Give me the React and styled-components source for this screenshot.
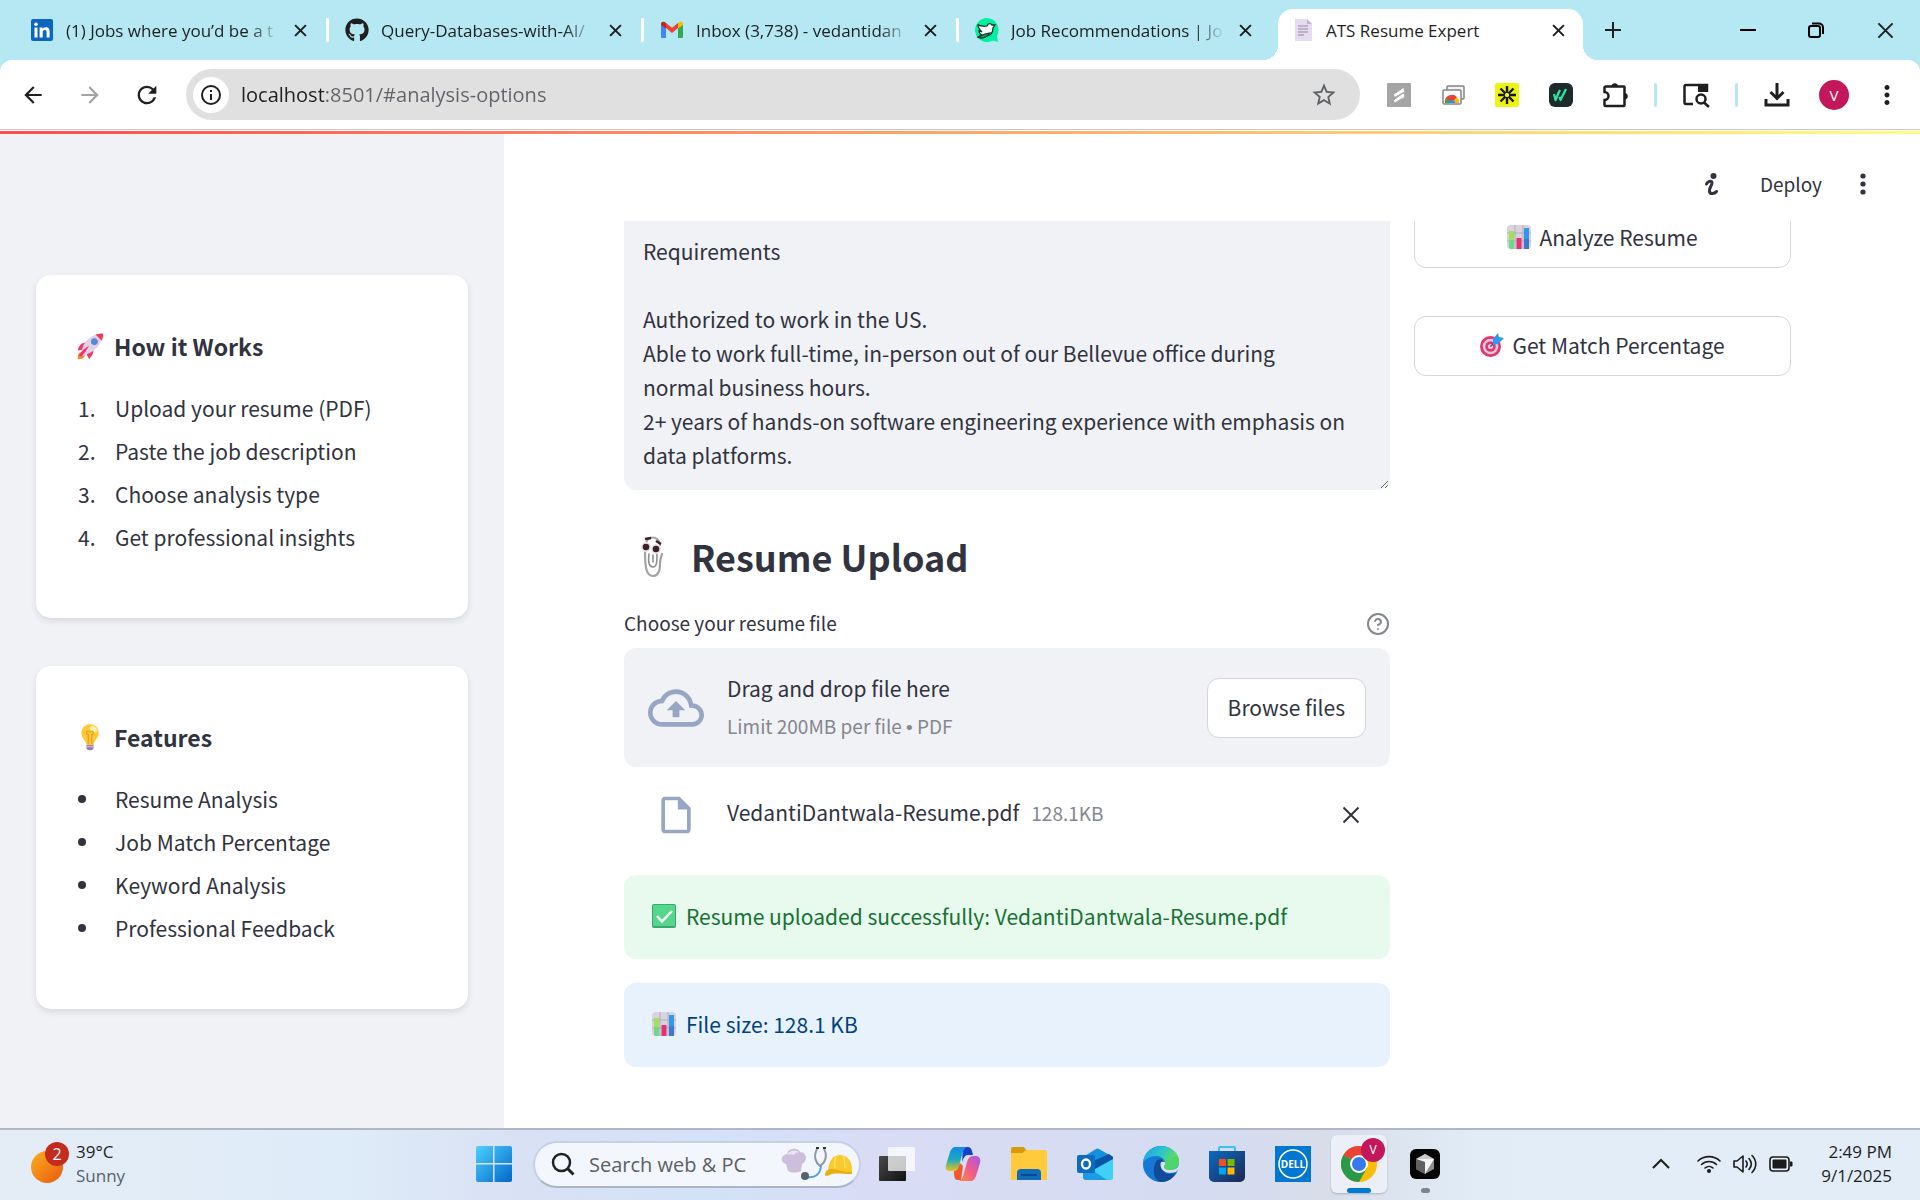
import React from "react";
import styled, { createGlobalStyle, css } from "styled-components";
import { FaGithub } from "react-icons/fa";
import { FiHelpCircle } from "react-icons/fi";
import {
  MdArrowBack,
  MdArrowForward,
  MdRefresh,
  MdStarBorder,
  MdMoreVert,
  MdOutlineCloudUpload,
  MdOutlineInsertDriveFile,
} from "react-icons/md";

const ui = `"Open Sans", "Noto Sans", sans-serif`;
const body = `"Noto Sans CJK SC", "Noto Sans", sans-serif`;
const ink = "#31333f";

const GlobalStyle = createGlobalStyle`
  *, *::before, *::after { box-sizing: border-box; }
  body { margin: 0; background: #fff; font-family: ${ui}; color: #1f1f1f; }
  button, input, textarea { font: inherit; color: inherit; margin: 0; }
  button { padding: 0; border: 0; background: none; cursor: pointer; }
  h2, h3, p, ol, ul { margin: 0; padding: 0; font-weight: inherit; }
  svg { display: block; flex: none; }
`;

const Screen = styled.div`
  display: flex;
  flex-direction: column;
  height: 100vh;
  overflow: hidden;
`;

/* ---------- tab strip ---------- */

const TabStrip = styled.header`
  display: flex;
  height: 60px;
  padding-left: 14px;
  background: #b5e8f2;
  flex: none;
`;

const TabList = styled.div`
  display: flex;
  flex: none;
`;

const Tab = styled.div`
  display: flex;
  align-items: center;
  width: ${(p) => (p.$active ? 305 : 315)}px;
  height: ${(p) => (p.$active ? 51 : 60)}px;
  margin-top: ${(p) => (p.$active ? 9 : 0)}px;
  margin-left: ${(p) => (p.$active ? 4 : 0)}px;
  padding: ${(p) => (p.$active ? "0 13px 9px 16px" : "0 17px 0 16px")};
  gap: 12px;
  position: relative;
  ${(p) =>
    p.$active &&
    css`
      background: #fff;
      border-radius: 15px 15px 0 0;
      &::before,
      &::after {
        content: "";
        position: absolute;
        bottom: 0;
        width: 15px;
        height: 15px;
      }
      &::before {
        left: -15px;
        background: radial-gradient(circle at 0 0, transparent 15px, #fff 15px);
      }
      &::after {
        right: -15px;
        background: radial-gradient(circle at 100% 0, transparent 15px, #fff 15px);
      }
    `}
  ${(p) =>
    p.$divided &&
    css`
      &::after {
        content: "";
        position: absolute;
        right: 0;
        top: 18px;
        width: 3px;
        height: 24px;
        border-radius: 1px;
        background: #fff;
      }
    `}
`;

const TabTitle = styled.span`
  flex: 1;
  min-width: 0;
  margin-right: -8px;
  padding-top: 2px;
  overflow: hidden;
  white-space: nowrap;
  font-size: 17px;
  line-height: 24px;
  mask-image: ${(p) => (p.$fade ? "linear-gradient(to right, #000 84%, transparent 98%)" : "none")};
`;

const IconButton = styled.button`
  display: flex;
  align-items: center;
  justify-content: center;
  width: ${(p) => p.$w || 24}px;
  height: ${(p) => p.$h || 24}px;
  color: ${(p) => p.$color || "#1f1f1f"};
  flex: none;
`;

const WindowControls = styled.div`
  display: flex;
  margin-left: auto;
`;

/* ---------- toolbar ---------- */

const ToolbarBack = styled.div`
  background: #b5e8f2;
  flex: none;
`;

const Toolbar = styled.div`
  display: flex;
  align-items: center;
  height: 69px;
  padding: 0 12px 0 12px;
  background: #fff;
  border-radius: 12px 12px 0 0;
`;

const NavButtons = styled.nav`
  display: flex;
  gap: 15px;
  margin-right: 18px;
`;

const Omnibox = styled.div`
  display: flex;
  align-items: center;
  flex: 1;
  height: 51px;
  padding: 0 22px 0 7px;
  gap: 12px;
  border-radius: 26px;
  background: #e0e0e0;
`;

const SiteInfo = styled.button`
  display: flex;
  align-items: center;
  justify-content: center;
  width: 36px;
  height: 36px;
  border-radius: 50%;
  background: #fff;
`;

const Address = styled.input`
  flex: 1;
  min-width: 0;
  height: 36px;
  padding: 0;
  border: 0;
  outline: 0;
  font-size: 20px;
  color: transparent;
  background: linear-gradient(to right, #1f1f1f 83px, #5f6368 83px);
  background-clip: text;
`;

const Extensions = styled.div`
  display: flex;
  align-items: center;
  margin-left: 12px;
`;

const ToolDivider = styled.span`
  width: 3px;
  height: 24px;
  margin: ${(p) => p.$m};
  border-radius: 2px;
  background: #b5e8f2;
`;

const Avatar = styled.button`
  width: 30px;
  height: 30px;
  margin: 0 17px 0 15px;
  border-radius: 50%;
  background: #c2185b;
  color: #fff;
  font-size: 15px;
  line-height: 30px;
`;

/* ---------- web page ---------- */

const Page = styled.div`
  display: flex;
  flex-direction: column;
  flex: 1;
  min-height: 0;
  border-top: 1px solid #c7c7c7;
  font-family: ${body};
  color: ${ink};
`;

const Decoration = styled.div`
  height: 3px;
  margin-top: 1px;
  background: linear-gradient(to right, #ff4b4b, #ffa569 50%, #fffd80);
  flex: none;
`;

const Columns = styled.div`
  display: flex;
  flex: 1;
  min-height: 0;
`;

const Sidebar = styled.aside`
  display: flex;
  flex-direction: column;
  gap: 48px;
  width: 504px;
  padding: 141px 36px 0;
  background: #f0f2f6;
  flex: none;
`;

const Card = styled.section`
  height: 343px;
  padding: 50px 40px;
  border-radius: 15px;
  background: #fff;
  box-shadow: 0 3px 6px rgba(0, 0, 0, 0.1);
`;

const CardTitle = styled.h3`
  display: flex;
  align-items: center;
  gap: 10px;
  margin-bottom: 22px;
  font-size: 23px;
  font-weight: 700;
  line-height: 42px;
`;

const CardList = styled.ul`
  display: flex;
  flex-direction: column;
  gap: 5px;
  list-style: none;
  font-size: 21px;
  line-height: 38px;
`;

const CardItem = styled.li`
  display: flex;
  align-items: center;
`;

const Marker = styled.span`
  width: 39px;
  padding-left: 2px;
  flex: none;
`;

const Dot = styled.span`
  display: block;
  width: 8px;
  height: 8px;
  border-radius: 50%;
  background: ${ink};
`;

const Main = styled.main`
  display: flex;
  flex-direction: column;
  flex: 1;
  min-width: 0;
  background: #fff;
`;

const AppHeader = styled.div`
  display: flex;
  align-items: center;
  justify-content: flex-end;
  height: 87px;
  padding: 13px 39px 0 0;
  flex: none;
`;

const DeployButton = styled.button`
  margin: 0 23px 0 41px;
  font-size: 19px;
  line-height: 30px;
`;

const Viewport = styled.div`
  flex: 1;
  min-height: 0;
  overflow: hidden;
`;

const Scrolled = styled.div`
  display: grid;
  grid-template-columns: minmax(0, 1fr) 377px;
  gap: 24px;
  margin-top: -13px;
  padding: 0 129px 0 120px;
`;

const Column = styled.div`
  display: flex;
  flex-direction: column;
`;

const JobText = styled.textarea`
  display: block;
  width: 100%;
  height: 282px;
  padding: 25px 18px 16px;
  border: 1px solid #f0f2f6;
  border-radius: 12px;
  outline: 0;
  background: #f0f2f6;
  font-size: 21px;
  line-height: 34px;
  overflow: hidden;
  resize: vertical;
`;

const Heading = styled.h2`
  display: flex;
  align-items: center;
  gap: 14px;
  margin-top: 36px;
  padding-left: 2px;
  font-size: 36px;
  font-weight: 700;
  line-height: 60px;
`;

const FieldRow = styled.div`
  display: flex;
  align-items: center;
  justify-content: space-between;
  height: 36px;
  margin-top: 20px;
  margin-bottom: 6px;
`;

const FieldLabel = styled.label`
  padding-bottom: 2px;
  font-size: 19px;
  line-height: 30px;
`;

const Dropzone = styled.div`
  display: flex;
  align-items: center;
  height: 119px;
  padding: 0 24px;
  border-radius: 12px;
  background: #f0f2f6;
`;

const DropText = styled.div`
  flex: 1;
  margin-left: 23px;
`;

const DropTitle = styled.p`
  font-size: 21px;
  line-height: 38px;
`;

const Muted = styled.span`
  font-size: 19px;
  line-height: 38px;
  color: #85878f;
`;

const Bullet = styled.span`
  font-family: "Liberation Sans", sans-serif;
`;

const Outlined = styled.button`
  display: flex;
  align-items: center;
  justify-content: center;
  gap: 8px;
  height: 60px;
  padding: 0 ${(p) => p.$pad || 18}px 2px;
  border: 1px solid #d6d6d9;
  border-radius: 12px;
  background: #fff;
  font-size: 21px;
  line-height: 38px;
`;

const FileRow = styled.div`
  display: flex;
  align-items: center;
  height: 60px;
  margin: 18px 24px 30px 30px;
`;

const FileInfo = styled.div`
  display: flex;
  align-items: baseline;
  gap: 12px;
  margin-left: 29px;
  padding-bottom: 6px;
`;

const FileName = styled.span`
  font-size: 21px;
  line-height: 38px;
`;

const RemoveSlot = styled.div`
  margin-left: auto;
`;

const Alert = styled.div`
  display: flex;
  align-items: center;
  gap: 10px;
  height: 84px;
  margin-bottom: 24px;
  padding: 0 28px 2px;
  border-radius: 12px;
  background: ${(p) => (p.$success ? "#e8f9ee" : "#e8f2fc")};
  color: ${(p) => (p.$success ? "#177233" : "#004280")};
  font-size: 21px;
  line-height: 38px;
`;

const ActionColumn = styled(Column)`
  gap: 48px;
`;

/* ---------- taskbar ---------- */

const Taskbar = styled.footer`
  display: grid;
  grid-template-columns: 1fr auto 1fr;
  align-items: center;
  height: 72px;
  padding-bottom: 2px;
  border-top: 2px solid #b0b7c3;
  background: linear-gradient(
    to right,
    #e4edf6 0%,
    #deebf8 18%,
    #d9e1f4 27%,
    #d3e2f7 37%,
    #d8dcf4 46%,
    #d5dcf2 63%,
    #d8dde9 69%,
    #e1ecf6 77%,
    #e2edf8 100%
  );
  flex: none;
`;

const Weather = styled.div`
  display: flex;
  align-items: center;
  gap: 6px;
  padding-left: 30px;
`;

const WeatherText = styled.div`
  font-size: 17px;
  line-height: 24px;
`;

const Conditions = styled.div`
  color: #5a6068;
`;

const TaskIcons = styled.div`
  display: flex;
  align-items: center;
  padding-left: 3px;
`;

const StartButton = styled(IconButton)`
  margin-right: 10px;
`;

const SearchBox = styled.label`
  display: flex;
  align-items: center;
  width: 328px;
  height: 47px;
  padding: 0 6px 0 16px;
  margin-right: 3px;
  border: 2px solid #c5d1e6;
  border-bottom-color: #aab5c8;
  border-radius: 24px;
  background: #f3f6fd;
`;

const SearchInput = styled.input`
  flex: 1;
  min-width: 0;
  padding: 0;
  margin-left: 14px;
  border: 0;
  outline: 0;
  background: none;
  font-size: 20px;
  &::placeholder {
    color: #5c5f64;
    opacity: 1;
  }
`;

const TaskButton = styled.button`
  display: flex;
  align-items: center;
  justify-content: center;
  position: relative;
  width: 56px;
  height: 58px;
  margin: 0 5px;
  border-radius: 6px;
  background: ${(p) => (p.$active ? "#eceff8" : "transparent")};
  box-shadow: ${(p) => (p.$active ? "0 1px 2px rgba(60, 70, 100, 0.3)" : "none")};
  &::after {
    content: "";
    display: ${(p) => (p.$active || p.$running ? "block" : "none")};
    position: absolute;
    bottom: 0;
    width: ${(p) => (p.$active ? 24 : 9)}px;
    height: 5px;
    border-radius: 3px;
    background: ${(p) => (p.$active ? "#0078d4" : "#7f848d")};
  }
`;

const Badge = styled.span`
  position: absolute;
  top: 3px;
  right: 2px;
  width: 24px;
  height: 24px;
  border-radius: 50%;
  background: #c2185b;
  color: #fff;
  font-size: 12px;
  line-height: 24px;
  text-align: center;
`;

const Tray = styled.div`
  display: flex;
  align-items: center;
  justify-content: flex-end;
  padding-right: 28px;
`;

const TrayGroup = styled.div`
  display: flex;
  align-items: center;
  gap: 12px;
  margin: 0 26px 0 24px;
`;

const Clock = styled.div`
  width: 73px;
  font-size: 17px;
  line-height: 24px;
  text-align: right;
  white-space: nowrap;
`;

/* ---------- drawings ---------- */

const Svg = ({ w, h = w, box, children }) => (
  <svg width={w} height={h} viewBox={box || `0 0 ${w} ${h}`} fill="none" aria-hidden="true">
    {children}
  </svg>
);

const Cross = ({ size = 12, stroke = 2 }) => (
  <Svg w={size} box="0 0 12 12">
    <path d="M1 1l10 10M11 1L1 11" stroke="currentColor" strokeWidth={(stroke * 12) / size} />
  </Svg>
);

const LinkedInMark = () => (
  <Svg w={24} box="0 0 24 24">
    <rect x="1" y="1" width="22" height="22" rx="2" fill="#0a66c2" />
    <path d="M4.500 9.500h3v10h-3zM9.600 9.500h2.900v1.400c.5-.9 1.600-1.700 3.200-1.700 3.200 0 3.900 2 3.900 4.800v5.500h-3v-4.900c0-1.300-.1-2.700-1.800-2.700-1.700 0-2.100 1.200-2.100 2.600v5h-3.100z" fill="#fff" />
    <circle cx="6" cy="6.200" r="1.800" fill="#fff" />
  </Svg>
);

const GmailMark = () => (
  <Svg w={24} box="0 0 24 24">
    <path d="M1 6v13a1 1 0 0 0 1 1h4V10z" fill="#4285f4" />
    <path d="M23 6v13a1 1 0 0 1-1 1h-4V10z" fill="#34a853" />
    <path d="M6 10V5l6 4.700L18 5v5l-6 5z" fill="#ea4335" />
    <path d="M1 7V6c0-2.200 2.200-2.800 3.600-1.900L6 5v5.500L1 7z" fill="#c5221f" />
    <path d="M23 7V6c0-2.200-2.200-2.800-3.600-1.900L18 5v5.500L23 7z" fill="#fbbc04" />
  </Svg>
);

const BirdMark = () => (
  <Svg w={24} box="0 0 24 24">
    <path d="M12 0a12 12 0 1 0 6 22.400l5 1.600-1-6A12 12 0 0 0 12 0z" fill="#00f0a0" />
    <path d="M3 7c4 1 6 2 9 1 1-3 4-3 5-1l3 0-2 3c0 4-2 7-6 8-3 2-6 3-9 1l4-2c-2-1-3-2-3-4l3 1C5 12 3 10 3 7z" fill="#fff" stroke="#10352a" strokeWidth="1.300" />
    <path d="M3 19c3 2 8 1 12-4l-5 1z" fill="#0a9c69" stroke="#10352a" strokeWidth="1.200" />
  </Svg>
);

const PageMark = () => (
  <Svg w={20} h={24} box="2 0 20 24">
    <path d="M3 1h12l5 5v17H3z" fill="#e6dbf0" />
    <path d="M15 1l5 5h-5z" fill="#c3b2d4" />
    <path d="M6 8h10M6 11h10M6 14h10M6 17h6" stroke="#b0a6ba" strokeWidth="1.300" />
  </Svg>
);

const InfoGlyph = () => (
  <Svg w={22} box="0 0 22 22">
    <circle cx="11" cy="11" r="9" stroke="#1f1f1f" strokeWidth="2" />
    <path d="M11 10v6M11 6v2" stroke="#1f1f1f" strokeWidth="2" />
  </Svg>
);

const BoltTile = () => (
  <Svg w={24}>
    <rect width="24" height="24" rx="1" fill="#a5a5a5" />
    <path d="M6.500 11.500l9-6.500q2-1 2 1v2q0 1-1 1.500l-8 4.500q-3 0-2-2.500zM6.500 17l9-6.500q2-1 2 1v2q0 1-1 1.500l-8 4.500q-3 0-2-2.500z" fill="#fff" stroke="#a5a5a5" />
  </Svg>
);

const CardsTile = () => (
  <Svg w={24}>
    <rect x="6" y="3" width="17" height="13" rx="1" fill="#f2f2f2" stroke="#858585" strokeWidth="1.500" />
    <rect x="2" y="7" width="18" height="14" rx="1" fill="#fff" stroke="#858585" strokeWidth="1.500" />
    <path d="M4 20a7 7 0 0 1 12-6l-5 6z" fill="#ea4335" />
    <path d="M4 20a7 7 0 0 1 2-5l5 5z" fill="#34a853" />
    <path d="M16 14a7 7 0 0 1 2 6h-7z" fill="#fbbc04" />
    <path d="M8 20a3 3 0 0 1 6 0z" fill="#4285f4" />
  </Svg>
);

const BurstTile = () => (
  <Svg w={24}>
    <rect width="24" height="24" rx="2" fill="#eef411" />
    <path d="M12 3v7M12 14v7M3 12h7M14 12h7M5.500 5.500l5 5M13.500 13.500l5 5M18.500 5.500l-5 5M10.500 13.500l-5 5" stroke="#16180a" strokeWidth="2.400" />
  </Svg>
);

const SlashTile = () => (
  <Svg w={24}>
    <rect width="24" height="24" rx="6" fill="#1c2b2b" />
    <path d="M5 11l1.500 6L10 9l1-2M10.500 14l1 3L17 6" stroke="#2fe3a1" strokeWidth="2.300" strokeLinejoin="round" />
  </Svg>
);

const PuzzleGlyph = () => (
  <Svg w={26}>
    <path d="M3 4.500h19a.5.5 0 0 1 .5.500v18a1 1 0 0 1-1 1h-18a1 1 0 0 1-1-1v-5a3.800 3.800 0 0 0 0-8V5.500a1 1 0 0 1 1-1z" stroke="#1f1f1f" strokeWidth="2.500" />
    <path d="M9.500 4a3.300 3.300 0 0 1 6.500 0zM23 11a3.300 3.300 0 0 1 0 6.500z" fill="#1f1f1f" />
  </Svg>
);

const SideSearchGlyph = () => (
  <Svg w={28} h={26}>
    <path d="M11 22H4a1.500 1.500 0 0 1-1.500-1.500v-16A1.500 1.500 0 0 1 4 3h21v7" stroke="#1f1f1f" strokeWidth="2.500" />
    <path d="M16 2h10v8H16z" fill="#1f1f1f" />
    <circle cx="19" cy="17" r="4.500" stroke="#1f1f1f" strokeWidth="2.500" />
    <path d="M22 20.500l5 4.500" stroke="#1f1f1f" strokeWidth="2.500" />
  </Svg>
);

const DownloadGlyph = () => (
  <Svg w={26}>
    <path d="M13 1v15M6.500 10l6.500 6.500 6.500-6.500M2 17v6h22v-6" stroke="#1f1f1f" strokeWidth="3" />
  </Svg>
);

const ScriptInfo = () => (
  <Svg w={14} h={24}>
    <circle cx="8.500" cy="4" r="3" fill={ink} />
    <path d="M1.500 12c1-2.500 5-4 5.500-1.500.4 2.500-3 5-2.500 9 .4 3 5 2.500 7 0" stroke={ink} strokeWidth="3" strokeLinecap="round" />
  </Svg>
);

const Rocket = () => (
  <Svg w={28} box="0 0 32 32">
    <path d="M2 31c0-5 1-8 5-8l3 3c0 4-4 5-8 5z" fill="#f58a1f" />
    <path d="M12 12c-6 0-9 4-10 9l7-1zM20 20c0 6-3 8-5 11l-4-8z" fill="#f0386b" />
    <path d="M6 24C8 10 18 2 30 2c0 12-8 21-22 25z" fill="#ddd2e8" />
    <path d="M22 3c3-1 6-2 9-1 0 3 0 5-2 8-2-3-4-5-7-7z" fill="#f23858" />
    <circle cx="21" cy="11" r="3.500" fill="#3f8fe8" stroke="#8d78a8" />
    <path d="M3 27c3-5 7-9 12-11-3 5-6 9-9 12z" fill="#f92f6c" />
  </Svg>
);

const Bulb = () => (
  <Svg w={28} box="0 0 32 32">
    <path d="M16 1a10 10 0 0 0-10 10c0 6 5 8 6 14h8c1-6 6-8 6-14A10 10 0 0 0 16 1z" fill="#ffc83a" />
    <path d="M18 3c4 0 6 3 6 6-1 2-4 2-6 1-3-2-3-6 0-7z" fill="#fff2a8" />
    <path d="M14 24V13h-1a2 2 0 1 1 3-2 2 2 0 1 1 3 2h-1v11" stroke="#eb9c1f" strokeWidth="1.300" />
    <path d="M12 25h8v4c-1 3-7 3-8 0z" fill="#9b7fb0" />
    <path d="M12 27h8" stroke="#d8c8e2" />
  </Svg>
);

const Bars = () => (
  <Svg w={24} box="0 0 24 24">
    <rect width="24" height="24" rx="4" fill="#d9d2df" />
    <path d="M0 8h24M0 16h24M8 0v24M16 0v24" stroke="#b4abbd" />
    <path d="M2 6h5v18H4a2 2 0 0 1-2-2z" fill="#a2e05c" />
    <path d="M2 15h5v9H4a2 2 0 0 1-2-2z" fill="#6cd98a" />
    <path d="M9.500 13h5v11h-5z" fill="#e72f74" />
    <path d="M17 3h5v21h-5z" fill="#2f9aea" />
    <path d="M17 14h5v10h-5z" fill="#3a7bd0" />
  </Svg>
);

const Target = () => (
  <Svg w={24} box="0 0 24 24">
    <circle cx="10.500" cy="13.500" r="10.500" fill="#e8336b" />
    <circle cx="10.500" cy="13.500" r="7.800" fill="#d7cbe2" />
    <circle cx="10.500" cy="13.500" r="5.200" fill="#e8336b" />
    <circle cx="10.500" cy="13.500" r="2.600" fill="#d7cbe2" />
    <path d="M10.500 13.500L17 7" stroke="#5b4a78" strokeWidth="1.500" />
    <path d="M13 10V6l5-6 1 4 5 1-6 6-5 1z" fill="#2f9bf0" />
  </Svg>
);

const CheckTile = () => (
  <Svg w={24} box="0 0 24 24">
    <rect width="24" height="24" rx="2" fill="#3aa873" />
    <rect x="1" y="1" width="22" height="21" rx="1" fill="#56d68c" />
    <path d="M5 12l5 5.500L20 7" stroke="#fff" strokeWidth="2.400" />
  </Svg>
);

const Clippy = () => (
  <Svg w={51} h={44}>
    <path d="M20 11c0-10 13-10 14 0M19 18c0 14 1 24 8 24 6 0 7-6 7-12 0-5 1-7 2-10" stroke="#a3a3a3" strokeWidth="2.200" strokeLinecap="round" />
    <path d="M23 20c-1 8 0 13 4 13s4-6 4-13M27 21v7" stroke="#8f8f8f" strokeWidth="1.600" strokeLinecap="round" />
    <circle cx="20" cy="13" r="5" fill="#e8e4e6" />
    <circle cx="30" cy="15" r="5" fill="#e8e4e6" />
    <circle cx="20" cy="13" r="3.300" fill="#3b2029" />
    <circle cx="30" cy="15" r="3.300" fill="#3b2029" />
    <path d="M19 5l6-1M30 7l5 3" stroke="#3b2029" strokeWidth="2.500" />
  </Svg>
);

const SunBadge = () => (
  <Svg w={40} h={44}>
    <defs>
      <linearGradient id="sun" x1="0" y1="0" x2="1" y2="1">
        <stop stopColor="#fdb022" />
        <stop offset="1" stopColor="#e8590c" />
      </linearGradient>
    </defs>
    <circle cx="17" cy="25" r="16" fill="url(#sun)" />
    <circle cx="27" cy="12" r="12" fill="#c42b1c" />
    <text x="27" y="18" fill="#fff" fontSize="16" textAnchor="middle">2</text>
  </Svg>
);

const WindowsMark = () => (
  <Svg w={36} box="0 0 36 36">
    <defs>
      <linearGradient id="win" x1="0" y1="0" x2="1" y2="1">
        <stop stopColor="#4fd0ff" />
        <stop offset="1" stopColor="#0067c8" />
      </linearGradient>
    </defs>
    <path d="M0 2a2 2 0 0 1 2-2h15v17H0zM18.500 0H34a2 2 0 0 1 2 2v15H18.500zM0 18.500h17V36H2a2 2 0 0 1-2-2zM18.500 18.500H36V34a2 2 0 0 1-2 2H18.500z" fill="url(#win)" />
  </Svg>
);

const SearchGlyph = () => (
  <Svg w={24}>
    <circle cx="10.500" cy="10.500" r="8.500" stroke="#222" strokeWidth="2.500" />
    <path d="M16.500 16.500l6 6" stroke="#222" strokeWidth="3" />
  </Svg>
);

const LabourDay = () => (
  <Svg w={72} h={36}>
    <path d="M7 25l-2-7c-6-1-6-9 1-10 1-6 11-7 13-2 7 0 8 9 2 12l-1 7c-4 2-9 2-13 0z" fill="#cdbfdc" />
    <path d="M6 9c2-5 10-6 12-2-2-1-4 0-5 2-2-1-5-1-7 0z" fill="#ebe4f2" />
    <path d="M36 3c-4 8-1 14 3 17 5-3 8-10 4-17" stroke="#8f9aa6" strokeWidth="2" />
    <path d="M40 20c-1 9-6 12-14 11" stroke="#4fa0dc" strokeWidth="2" />
    <circle cx="24" cy="30" r="4" fill="#57606b" />
    <path d="M35 2h3M42 2h3" stroke="#333" strokeWidth="2" />
    <path d="M47 24c1-9 5-15 12-15 7 0 12 6 12 14v4l-24 0z" fill="#f8ca2c" />
    <path d="M44 29c0-4 3-6 7-6 6 0 9 3 20 3v2c-10 0-16-1-20 0-2 1-7 3-7 1z" fill="#e9ad12" />
    <path d="M55 11c-2 4-2 7-1 11M62 10c2 3 2 7 2 12" stroke="#fde16a" strokeWidth="1.500" />
  </Svg>
);

const TaskView = () => (
  <Svg w={36}>
    <defs>
      <linearGradient id="tv" x1="0" y1="0" x2="1" y2="1">
        <stop stopColor="#4a4a4a" />
        <stop offset="1" stopColor="#111" />
      </linearGradient>
    </defs>
    <rect x="0" y="10" width="27" height="25" rx="1" fill="url(#tv)" />
    <rect x="9" y="1" width="27" height="24" rx="1" fill="#fff" fillOpacity=".75" />
  </Svg>
);

const Copilot = () => (
  <Svg w={36}>
    <defs>
      <linearGradient id="cpa" x1="0" y1="0" x2="0" y2="1">
        <stop stopColor="#1689f0" />
        <stop offset=".5" stopColor="#17a9c0" />
        <stop offset="1" stopColor="#e8c51c" />
      </linearGradient>
      <linearGradient id="cpb" x1="1" y1="0" x2="0" y2="1">
        <stop stopColor="#a05be8" />
        <stop offset=".5" stopColor="#f0598f" />
        <stop offset="1" stopColor="#ff8a3c" />
      </linearGradient>
    </defs>
    <path d="M18 1h5c3 0 4 3 5 8h-5c-3 0-4 2-6 7z" fill="#1740c8" />
    <path d="M10 1h12c-3 1-4 4-5 8l-3 11c-1 3-3 5-6 5H5c-4 0-5-3-4-6L5 6c1-3 3-5 5-5z" fill="url(#cpa)" />
    <path d="M9 25c3 0 4-2 6-8l3 3-2 14h-4c-2 0-3-3-3-9z" fill="#f4562e" />
    <path d="M26 35H14c3-1 4-4 5-8l3-11c1-4 3-6 6-6h3c4 0 5 4 4 7l-4 13c-1 3-3 5-5 5z" fill="url(#cpb)" />
  </Svg>
);

const Folder = () => (
  <Svg w={36}>
    <path d="M0 3a2 2 0 0 1 2-2h11l3 4h-2l-4 4H0z" fill="#d99a08" />
    <path d="M0 7h12l3-3h19a2 2 0 0 1 2 2v28H0z" fill="#ffcb3d" />
    <path d="M6 34V27a4 4 0 0 1 4-4h16a4 4 0 0 1 4 4v7z" fill="#0f6cbd" />
    <path d="M10 29h16" stroke="#0a4a8a" strokeWidth="2" />
  </Svg>
);

const Outlook = () => (
  <Svg w={36}>
    <path d="M6 11L19 3a3 3 0 0 1 3 0l14 8v10H6z" fill="#1590df" />
    <path d="M12 17l20-9 4 3v4l-16 12z" fill="#0b53a8" />
    <path d="M6 17l12 6 18-10v19a2 2 0 0 1-2 2H9a3 3 0 0 1-3-3z" fill="#40cff5" />
    <path d="M6 18l24 16H9a3 3 0 0 1-3-3z" fill="#1b9ae6" />
    <rect x="0" y="9" width="18" height="18" rx="2" fill="#0f6cbd" />
    <ellipse cx="9" cy="18" rx="4" ry="4.500" stroke="#fff" strokeWidth="2.300" />
  </Svg>
);

const Edge = () => (
  <Svg w={36}>
    <defs>
      <linearGradient id="eda" x1="0" y1="0" x2="1" y2=".4">
        <stop stopColor="#1e9de6" />
        <stop offset=".5" stopColor="#2bc3d2" />
        <stop offset="1" stopColor="#63e04c" />
      </linearGradient>
    </defs>
    <circle cx="18" cy="18" r="18" fill="#1478d4" />
    <path d="M0 17C1 7 9 0 18 0c11 0 18 8 18 15 0 6-4 9-9 9-4 0-6-2-6-3 0-2 2-2 1-5-1-4-5-6-9-6C7 10 2 13 0 17z" fill="url(#eda)" />
    <path d="M12 18c1-4 4-6 8-4-3 2-3 14 7 14 3 0 5-1 6-2-3 7-9 10-15 10-6-1-9-10-6-18z" fill="#114a96" />
    <path d="M36 17c0 5-4 7-9 7-4 0-6-2-6-3 0-2 2-2 1-5l-4 0c-2 5 2 11 9 11 3 0 5-1 6-1l3-3z" fill="#dbe0f1" />
    <path d="M22 15c2 3-1 4-1 6 0 1 2 3 6 3 5 0 9-3 9-9 0-2-1-4-2-6z" fill="#4ed66a" />
  </Svg>
);

const Store = () => (
  <Svg w={36}>
    <defs>
      <linearGradient id="st" x1="0" y1="0" x2="1" y2="1">
        <stop stopColor="#0a6cc4" />
        <stop offset="1" stopColor="#20264f" />
      </linearGradient>
    </defs>
    <path d="M10 6V2a1 1 0 0 1 1-1h14a1 1 0 0 1 1 1v4" stroke="#38c0f0" strokeWidth="2" />
    <path d="M0 5h36v26a5 5 0 0 1-5 5H5a5 5 0 0 1-5-5z" fill="url(#st)" />
    <path d="M10 13h7v7h-7z" fill="#f25022" />
    <path d="M18.500 13h7v7h-7z" fill="#7fba00" />
    <path d="M10 21.500h7v7h-7z" fill="#00a4ef" />
    <path d="M18.500 21.500h7v7h-7z" fill="#ffb900" />
  </Svg>
);

const Dell = () => (
  <Svg w={36}>
    <rect width="36" height="36" fill="#0078d0" />
    <circle cx="18" cy="18" r="14" stroke="#fff" strokeWidth="1.500" />
    <text x="18" y="22" fill="#fff" fontSize="10" fontWeight="700" textAnchor="middle">DELL</text>
  </Svg>
);

const Chrome = () => (
  <Svg w={36}>
    <circle cx="18" cy="18" r="18" fill="#fbbc04" />
    <path d="M18 18L2.400 9A18 18 0 0 1 33.600 9z" fill="#ea4335" />
    <path d="M2.400 9A18 18 0 0 0 18 36l8-14-8-4z" fill="#28984a" />
    <circle cx="18" cy="18" r="9" fill="#fff" />
    <circle cx="18" cy="18" r="7" fill="#3579ea" />
  </Svg>
);

const Cursor = () => (
  <Svg w={30}>
    <rect width="30" height="30" rx="6" fill="#050505" />
    <path d="M15 5l9 5v10l-9 5-9-5V10z" fill="#8d8d8d" />
    <path d="M6 10l9-5 9 5-9 3z" fill="#c9c9c9" />
    <path d="M24 10l-9 15V13L6 10z" fill="#f4f4f4" />
    <path d="M6 10l9 3v12l-9-5z" fill="#606060" />
  </Svg>
);

const WifiGlyph = () => (
  <Svg w={24}>
    <path d="M1 9a16 16 0 0 1 22 0M4.500 12.500a11 11 0 0 1 15 0M8 16a6 6 0 0 1 8 0" stroke="#1b1b1b" strokeWidth="1.600" strokeLinecap="round" />
    <circle cx="12" cy="19" r="2" fill="#1b1b1b" />
  </Svg>
);

const SpeakerGlyph = () => (
  <Svg w={24}>
    <path d="M1 9h3l6-5v16l-6-5H1z" stroke="#1b1b1b" strokeWidth="1.600" strokeLinejoin="round" />
    <path d="M13 9c1.500 2 1.500 4 0 6M16 6.500c3 3.500 3 7.500 0 11M19 3.500c5 5 5 12 0 17" stroke="#1b1b1b" strokeWidth="1.600" strokeLinecap="round" />
  </Svg>
);

const BatteryGlyph = () => (
  <Svg w={24}>
    <rect x="1" y="5" width="19" height="14" rx="3" stroke="#1b1b1b" strokeWidth="1.600" />
    <rect x="3.500" y="7.500" width="14" height="9" rx="1" fill="#1b1b1b" />
    <path d="M21 9.500h1.500a1 1 0 0 1 1 1v3a1 1 0 0 1-1 1H21z" fill="#1b1b1b" />
  </Svg>
);

/* ---------- data ---------- */

const tabs = [
  { title: "(1) Jobs where you’d be a t", icon: <LinkedInMark />, divided: true },
  { title: "Query-Databases-with-AI/", icon: <FaGithub size={24} />, divided: true },
  { title: "Inbox (3,738) - vedantidan", icon: <GmailMark />, divided: true },
  { title: "Job Recommendations | Jo", icon: <BirdMark /> },
  { title: "ATS Resume Expert", icon: <PageMark />, active: true },
];

const steps = [
  "Upload your resume (PDF)",
  "Paste the job description",
  "Choose analysis type",
  "Get professional insights",
];

const features = [
  "Resume Analysis",
  "Job Match Percentage",
  "Keyword Analysis",
  "Professional Feedback",
];

const jobDescription = `Requirements

Authorized to work in the US.
Able to work full-time, in-person out of our Bellevue office during
normal business hours.
2+ years of hands-on software engineering experience with emphasis on
data platforms.`;

const extensions = [
  ["Grammar", <BoltTile />],
  ["Screenshots", <CardsTile />],
  ["Highlights", <BurstTile />],
  ["Autofill", <SlashTile />],
  ["Extensions", <PuzzleGlyph />],
];

const apps = [
  ["Task view", <TaskView />],
  ["Copilot", <Copilot />],
  ["File Explorer", <Folder />],
  ["Outlook", <Outlook />],
  ["Edge", <Edge />],
  ["Store", <Store />],
  ["Dell", <Dell />],
];

export default function App() {
  return (
    <Screen>
      <GlobalStyle />
      <TabStrip>
        <TabList>
          {tabs.map((t) => (
            <Tab key={t.title} $active={t.active} $divided={t.divided}>
              {t.icon}
              <TabTitle $fade={!t.active}>{t.title}</TabTitle>
              <IconButton aria-label="Close tab">
                <Cross size={13} stroke={2} />
              </IconButton>
            </Tab>
          ))}
        </TabList>
        <IconButton $w={60} $h={60} aria-label="New tab">
          <Svg w={16}>
            <path d="M8 0v16M0 8h16" stroke="#1f1f1f" strokeWidth="2" />
          </Svg>
        </IconButton>
        <WindowControls>
          <IconButton $w={68} $h={60} aria-label="Minimize">
            <Svg w={16}>
              <path d="M0 8h16" stroke="#000" strokeWidth="2" />
            </Svg>
          </IconButton>
          <IconButton $w={68} $h={60} aria-label="Restore">
            <Svg w={16}>
              <rect x="1" y="4" width="11" height="11" rx="2" stroke="#000" strokeWidth="2" />
              <path d="M4 1.500h7a4 4 0 0 1 4 4V12" stroke="#000" strokeWidth="2" />
            </Svg>
          </IconButton>
          <IconButton $w={70} $h={60} aria-label="Close window">
            <Cross size={17} stroke={2} />
          </IconButton>
        </WindowControls>
      </TabStrip>

      <ToolbarBack>
        <Toolbar>
          <NavButtons>
            <IconButton $w={42} $h={42} aria-label="Back">
              <MdArrowBack size={26} />
            </IconButton>
            <IconButton $w={42} $h={42} $color="#a3a3a3" aria-label="Forward">
              <MdArrowForward size={26} />
            </IconButton>
            <IconButton $w={42} $h={42} aria-label="Reload">
              <MdRefresh size={28} />
            </IconButton>
          </NavButtons>
          <Omnibox>
            <SiteInfo aria-label="Site information">
              <InfoGlyph />
            </SiteInfo>
            <Address aria-label="Address" defaultValue="localhost:8501/#analysis-options" />
            <IconButton $w={28} $h={28} $color="#5f6368" aria-label="Bookmark">
              <MdStarBorder size={28} />
            </IconButton>
          </Omnibox>
          <Extensions>
            {extensions.map(([name, icon]) => (
              <IconButton key={name} $w={54} $h={42} aria-label={name}>
                {icon}
              </IconButton>
            ))}
            <ToolDivider $m="0 12px" />
            <IconButton $w={54} $h={42} aria-label="Side search">
              <SideSearchGlyph />
            </IconButton>
            <ToolDivider $m="0 12px" />
            <IconButton $w={54} $h={42} aria-label="Downloads">
              <DownloadGlyph />
            </IconButton>
            <Avatar aria-label="Profile">V</Avatar>
            <IconButton $w={42} $h={42} aria-label="Menu">
              <MdMoreVert size={30} />
            </IconButton>
          </Extensions>
        </Toolbar>
      </ToolbarBack>

      <Page>
        <Decoration />
        <Columns>
          <Sidebar>
            <Card>
              <CardTitle>
                <Rocket />
                How it Works
              </CardTitle>
              <CardList as="ol">
                {steps.map((s, i) => (
                  <CardItem key={s}>
                    <Marker>{i + 1}.</Marker>
                    {s}
                  </CardItem>
                ))}
              </CardList>
            </Card>
            <Card>
              <CardTitle>
                <Bulb />
                Features
              </CardTitle>
              <CardList>
                {features.map((f) => (
                  <CardItem key={f}>
                    <Marker>
                      <Dot />
                    </Marker>
                    {f}
                  </CardItem>
                ))}
              </CardList>
            </Card>
          </Sidebar>

          <Main>
            <AppHeader>
              <ScriptInfo />
              <DeployButton>Deploy</DeployButton>
              <IconButton $w={36} $h={36} $color={ink} aria-label="App menu">
                <Svg w={6} h={22}>
                  <circle cx="3" cy="3" r="2.600" fill={ink} />
                  <circle cx="3" cy="11" r="2.600" fill={ink} />
                  <circle cx="3" cy="19" r="2.600" fill={ink} />
                </Svg>
              </IconButton>
            </AppHeader>
            <Viewport>
              <Scrolled>
                <Column>
                  <JobText aria-label="Job description" defaultValue={jobDescription} spellCheck={false} />
                  <Heading>
                    <Clippy />
                    Resume Upload
                  </Heading>
                  <FieldRow>
                    <FieldLabel htmlFor="resume">Choose your resume file</FieldLabel>
                    <IconButton $color="#85878f" aria-label="Help">
                      <FiHelpCircle size={24} />
                    </IconButton>
                  </FieldRow>
                  <Dropzone>
                    <MdOutlineCloudUpload size={56} color="#97a6c3" />
                    <DropText>
                      <DropTitle>Drag and drop file here</DropTitle>
                      <Muted>
                        Limit 200MB per file <Bullet>•</Bullet> PDF
                      </Muted>
                    </DropText>
                    <input id="resume" type="file" accept=".pdf" hidden />
                    <Outlined $pad={20} onClick={() => document.getElementById("resume").click()}>
                      Browse files
                    </Outlined>
                  </Dropzone>
                  <FileRow>
                    <MdOutlineInsertDriveFile size={44} color="#97a6c3" />
                    <FileInfo>
                      <FileName>VedantiDantwala-Resume.pdf</FileName>
                      <Muted>128.1KB</Muted>
                    </FileInfo>
                    <RemoveSlot>
                      <IconButton $w={30} $h={30} $color={ink} aria-label="Remove file">
                        <Cross size={18} stroke={2} />
                      </IconButton>
                    </RemoveSlot>
                  </FileRow>
                  <Alert $success role="alert">
                    <CheckTile />
                    Resume uploaded successfully: VedantiDantwala-Resume.pdf
                  </Alert>
                  <Alert role="alert">
                    <Bars />
                    File size: 128.1 KB
                  </Alert>
                </Column>
                <ActionColumn>
                  <Outlined>
                    <Bars />
                    Analyze Resume
                  </Outlined>
                  <Outlined>
                    <Target />
                    Get Match Percentage
                  </Outlined>
                </ActionColumn>
              </Scrolled>
            </Viewport>
          </Main>
        </Columns>
      </Page>

      <Taskbar>
        <Weather>
          <SunBadge />
          <WeatherText>
            <div>39°C</div>
            <Conditions>Sunny</Conditions>
          </WeatherText>
        </Weather>
        <TaskIcons>
          <StartButton $w={58} $h={58} aria-label="Start">
            <WindowsMark />
          </StartButton>
          <SearchBox>
            <SearchGlyph />
            <SearchInput placeholder="Search web &amp; PC" aria-label="Search web and PC" />
            <LabourDay />
          </SearchBox>
          {apps.map(([name, icon]) => (
            <TaskButton key={name} aria-label={name}>
              {icon}
            </TaskButton>
          ))}
          <TaskButton $active aria-label="Chrome">
            <Chrome />
            <Badge>V</Badge>
          </TaskButton>
          <TaskButton $running aria-label="Cursor">
            <Cursor />
          </TaskButton>
        </TaskIcons>
        <Tray>
          <IconButton aria-label="Show hidden icons">
            <Svg w={18} h={12}>
              <path d="M1 10l8-8 8 8" stroke="#1b1b1b" strokeWidth="2" />
            </Svg>
          </IconButton>
          <TrayGroup>
            <WifiGlyph />
            <SpeakerGlyph />
            <BatteryGlyph />
          </TrayGroup>
          <Clock>
            <div>2:49 PM</div>
            <div>9/1/2025</div>
          </Clock>
        </Tray>
      </Taskbar>
    </Screen>
  );
}
